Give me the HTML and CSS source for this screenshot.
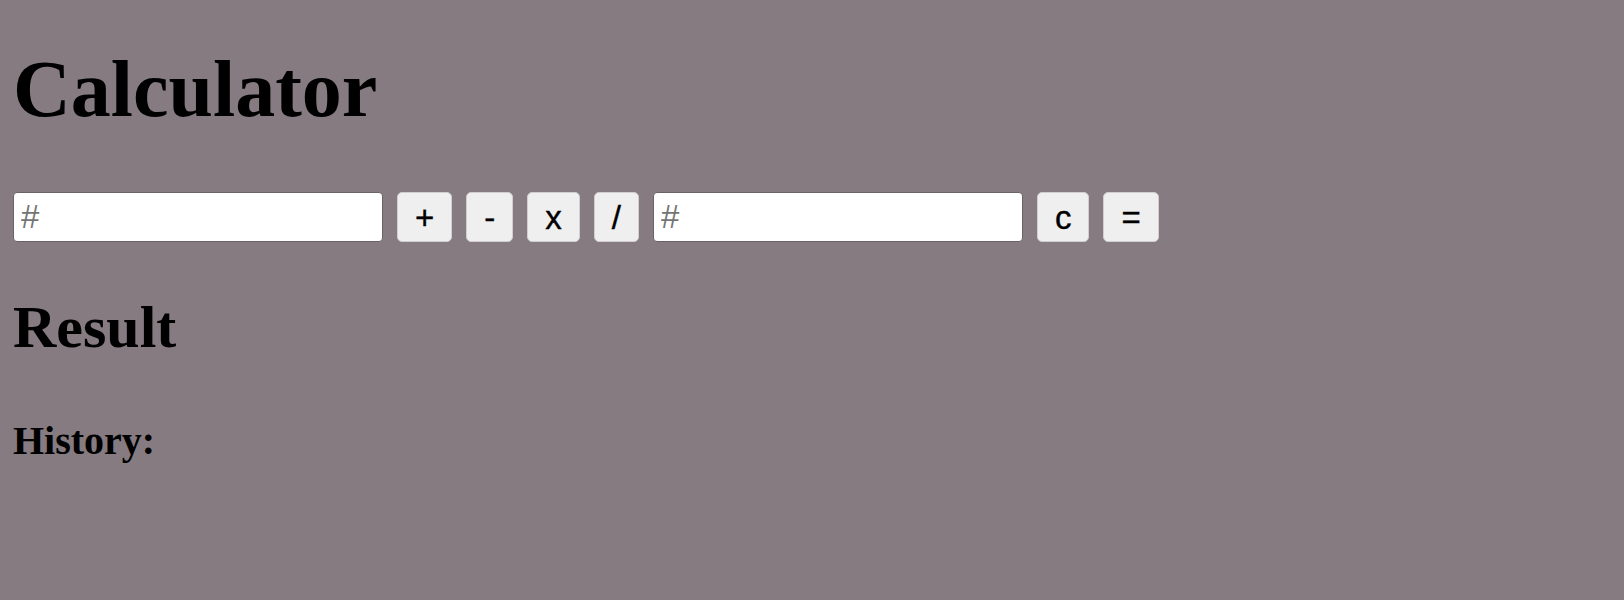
FILE: index.html
```html
<!DOCTYPE html>
<html>
<head>
<meta charset="utf-8">
<title>Calculator</title>
<link rel="stylesheet" href="styles.css">
</head>
<body>
<h1 class="title">Calculator</h1>
<div class="calc-row">
  <input class="num-input" type="text" placeholder="#">
  <button class="op-btn">+</button>
  <button class="op-btn">-</button>
  <button class="op-btn">x</button>
  <button class="op-btn">/</button>
  <input class="num-input" type="text" placeholder="#">
  <button class="op-btn">c</button>
  <button class="op-btn">=</button>
</div>
<h2 class="result">Result</h2>
<h4 class="history">History:</h4>
</body>
</html>
```
FILE: styles.css
```css
html, body {
  margin: 0;
  padding: 0;
}
body {
  background: #857b80;
  font-family: "Liberation Serif", "Times New Roman", serif;
  color: #000;
  padding: 0 0 0 13px;
  height: 600px;
  box-sizing: border-box;
  overflow: hidden;
}
.title {
  font-size: 80px;
  font-weight: bold;
  line-height: 92px;
  margin: 43px 0 0 0;
}
.calc-row {
  display: flex;
  align-items: center;
  gap: 14px;
  margin-top: 57px;
  height: 50px;
}
.num-input {
  box-sizing: border-box;
  width: 370px;
  height: 50px;
  margin: 0;
  padding: 0 8px 0 7px;
  border: 1px solid #6a6266;
  border-radius: 4px;
  background: #fff;
  font-family: "Liberation Sans", Arial, sans-serif;
  font-size: 33px;
  color: #000;
  outline: none;
}
.num-input::placeholder {
  color: #757575;
}
.op-btn {
  box-sizing: border-box;
  height: 50px;
  margin: 0;
  padding: 0 17px;
  border: 1px solid #d2ced0;
  border-radius: 5px;
  background: #efefef;
  font-family: "Liberation Sans", Arial, sans-serif;
  font-size: 33px;
  color: #000;
  line-height: 1;
  -webkit-text-stroke: 0.4px #000;
}
.result {
  font-size: 60px;
  font-weight: bold;
  line-height: 69px;
  margin: 51px 0 0 0;
}
.history {
  font-size: 40px;
  font-weight: bold;
  line-height: 46px;
  margin: 56px 0 0 0;
}
```
